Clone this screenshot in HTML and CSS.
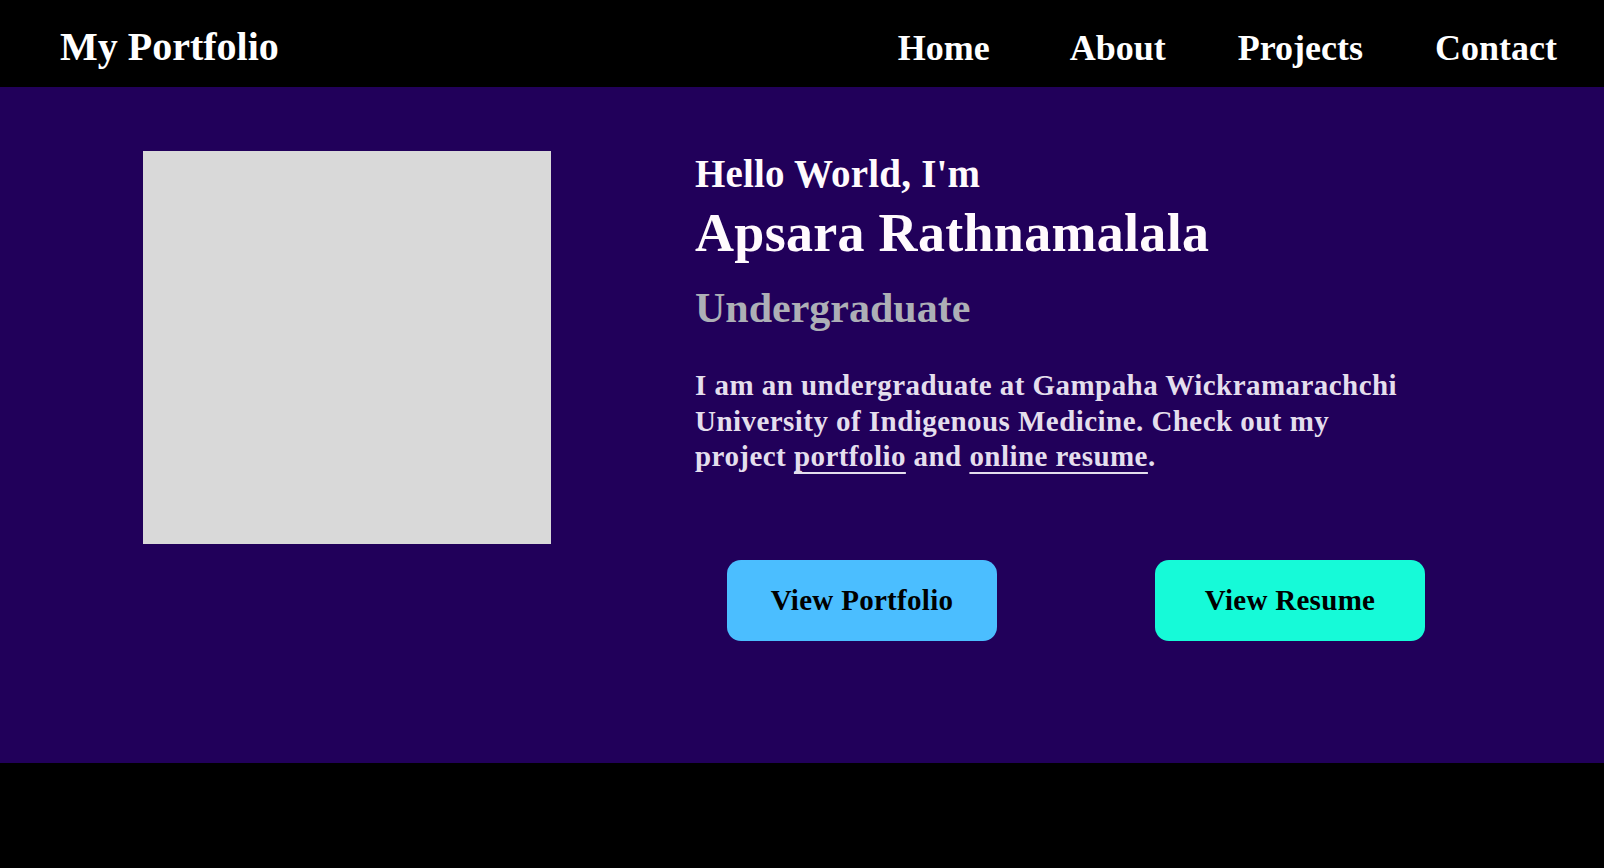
FILE: index.html
```html
<!DOCTYPE html>
<html lang="en">
<head>
<meta charset="utf-8">
<title>My Portfolio</title>
<link rel="stylesheet" href="styles.css">
</head>
<body>
<header class="site-header">
  <div class="logo">My Portfolio</div>
  <nav class="nav">
    <a class="nav-link nav-home" href="#">Home</a>
    <a class="nav-link" href="#">About</a>
    <a class="nav-link" href="#">Projects</a>
    <a class="nav-link" href="#">Contact</a>
  </nav>
</header>
<main class="hero">
  <div class="photo"></div>
  <div class="intro">
    <h2 class="greeting">Hello World, I'm</h2>
    <h1 class="name">Apsara Rathnamalala</h1>
    <h3 class="role">Undergraduate</h3>
    <p class="bio">I am an undergraduate at Gampaha Wickramarachchi University of Indigenous Medicine. Check out my project <a class="bio-link" href="#">portfolio</a> and <a class="bio-link" href="#">online resume</a>.</p>
    <div class="actions">
      <a class="btn btn-portfolio" href="#">View Portfolio</a>
      <a class="btn btn-resume" href="#">View Resume</a>
    </div>
  </div>
</main>
</body>
</html>
```
FILE: styles.css
```css
* { box-sizing: border-box; }

html, body {
  margin: 0;
  padding: 0;
  background: #000;
}

body {
  font-family: "Liberation Serif", "Times New Roman", serif;
  font-weight: bold;
  color: #fff;
}

.site-header {
  height: 87px;
  padding: 27px 47px 0 60px;
  display: flex;
  justify-content: space-between;
  align-items: baseline;
  background: #000;
}

.logo {
  font-size: 40px;
  line-height: 40px;
  color: #fff;
}

.nav {
  display: flex;
  align-items: baseline;
  gap: 72px;
}

.nav-link {
  font-size: 36px;
  line-height: 40px;
  color: #fff;
  text-decoration: none;
}

.nav-home {
  margin-right: 8px;
}

.hero {
  height: 676px;
  background: #21005a;
  padding: 64px 0 0 143px;
  display: flex;
  align-items: flex-start;
  gap: 144px;
}

.photo {
  width: 408px;
  height: 393px;
  background: #d9d9d9;
  flex: none;
}

.intro {
  width: 770px;
}

.greeting {
  margin: 3px 0 0;
  font-size: 39px;
  line-height: 40px;
  letter-spacing: 0.2px;
  color: #fffafd;
}

.name {
  margin: 11px 0 0;
  font-size: 54px;
  line-height: 56px;
  letter-spacing: 0.3px;
  color: #fffafd;
}

.role {
  margin: 25px 0 0;
  font-size: 42px;
  line-height: 44px;
  color: #adafb6;
}

.bio {
  margin: 38px 0 0;
  max-width: 720px;
  font-size: 29px;
  line-height: 35.5px;
  letter-spacing: 0.45px;
  color: #e4deed;
}

.bio-link {
  color: #e4deed;
  text-decoration: underline;
  text-decoration-thickness: 2px;
  text-underline-offset: 6px;
}

.actions {
  margin-top: 85px;
  padding-left: 32px;
  display: flex;
  gap: 158px;
}

.btn {
  width: 270px;
  height: 81px;
  border-radius: 14px;
  display: flex;
  align-items: center;
  justify-content: center;
  font-size: 29px;
  letter-spacing: 0.3px;
  color: #000;
  text-decoration: none;
}

.btn-portfolio { background: #4bbeff; }
.btn-resume { background: #16fad8; }
```
